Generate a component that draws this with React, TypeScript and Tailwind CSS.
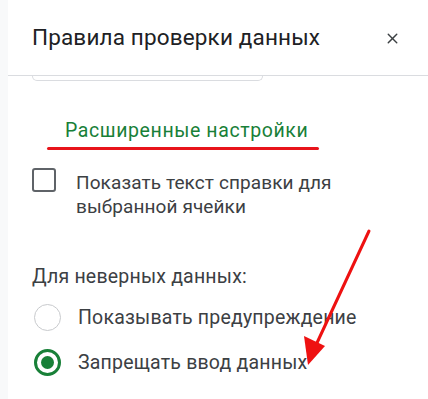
import { X } from "lucide-react";

export default function App() {
  return (
    <div className="relative flex h-[399px] w-[428px] overflow-hidden bg-white font-['Roboto',sans-serif]">
      {/* left strip */}
      <div className="w-2 shrink-0 bg-[#f8f9fa]" />

      <div className="flex min-w-0 flex-1 flex-col">
        {/* header */}
        <div className="flex h-[76px] items-center justify-between border-b border-[#dadce0] pl-6 pr-[27px]">
          <h1 className="text-[22.5px] font-normal tracking-[0.15px] text-[#202124]">Правила проверки данных</h1>
          <X className="mt-[2px] h-[17px] w-[17px] text-[#3c4043]" strokeWidth={2} />
        </div>
        {/* bottom of input cut off by scroll */}
        <div className="ml-6 h-[5px] w-[231px] rounded-b-md border-x border-b border-[#dadce0]" />

        {/* advanced settings */}
        <div className="mt-[38px] pl-[57px] text-[19.5px] leading-6 tracking-[0.6px] text-[#188038]">
          Расширенные настройки
        </div>
        <div className="ml-[39px] mt-[4px] h-[3px] w-[272px] rounded-full bg-[#e8141b]" />

        <div className="mt-[18px] flex items-start gap-[20px] pl-6">
          <div className="h-6 w-6 shrink-0 rounded-[3px] border-2 border-[#5f6368]" />
          <p className="mt-[3px] text-[19px] leading-6 tracking-[0.1px] text-[#3c4043]">
            Показать текст справки для
            <br />
            выбранной ячейки
          </p>
        </div>

        <div className="mt-[46px] pl-6 text-[19.5px] leading-6 tracking-[0.2px] text-[#3c4043]">Для неверных данных:</div>

        <div className="mt-[15px] flex flex-col gap-[18px] pl-[26px]">
          <div className="flex items-center gap-[17px]">
            <div className="h-[27px] w-[27px] shrink-0 rounded-full border border-[#c8cacd]" />
            <span className="text-[19.5px] leading-6 tracking-[0.2px] text-[#3c4043]">Показывать предупреждение</span>
          </div>
          <div className="flex items-center gap-[17px]">
            <div className="flex h-[27px] w-[27px] shrink-0 items-center justify-center rounded-full border-[3px] border-[#188038]">
              <div className="h-[13px] w-[13px] rounded-full bg-[#188038]" />
            </div>
            <span className="text-[19.5px] leading-6 tracking-[0.2px] text-[#3c4043]">Запрещать ввод данных</span>
          </div>
        </div>
      </div>

      {/* red annotation arrow */}
      <svg className="pointer-events-none absolute left-0 top-0" width="428" height="399" viewBox="0 0 428 399">
        <line x1="369" y1="231" x2="316" y2="345" stroke="#ee1111" strokeWidth="3" strokeLinecap="round" />
        <polygon points="308,365 304,336 325,346" fill="#ee1111" />
      </svg>
    </div>
  );
}
